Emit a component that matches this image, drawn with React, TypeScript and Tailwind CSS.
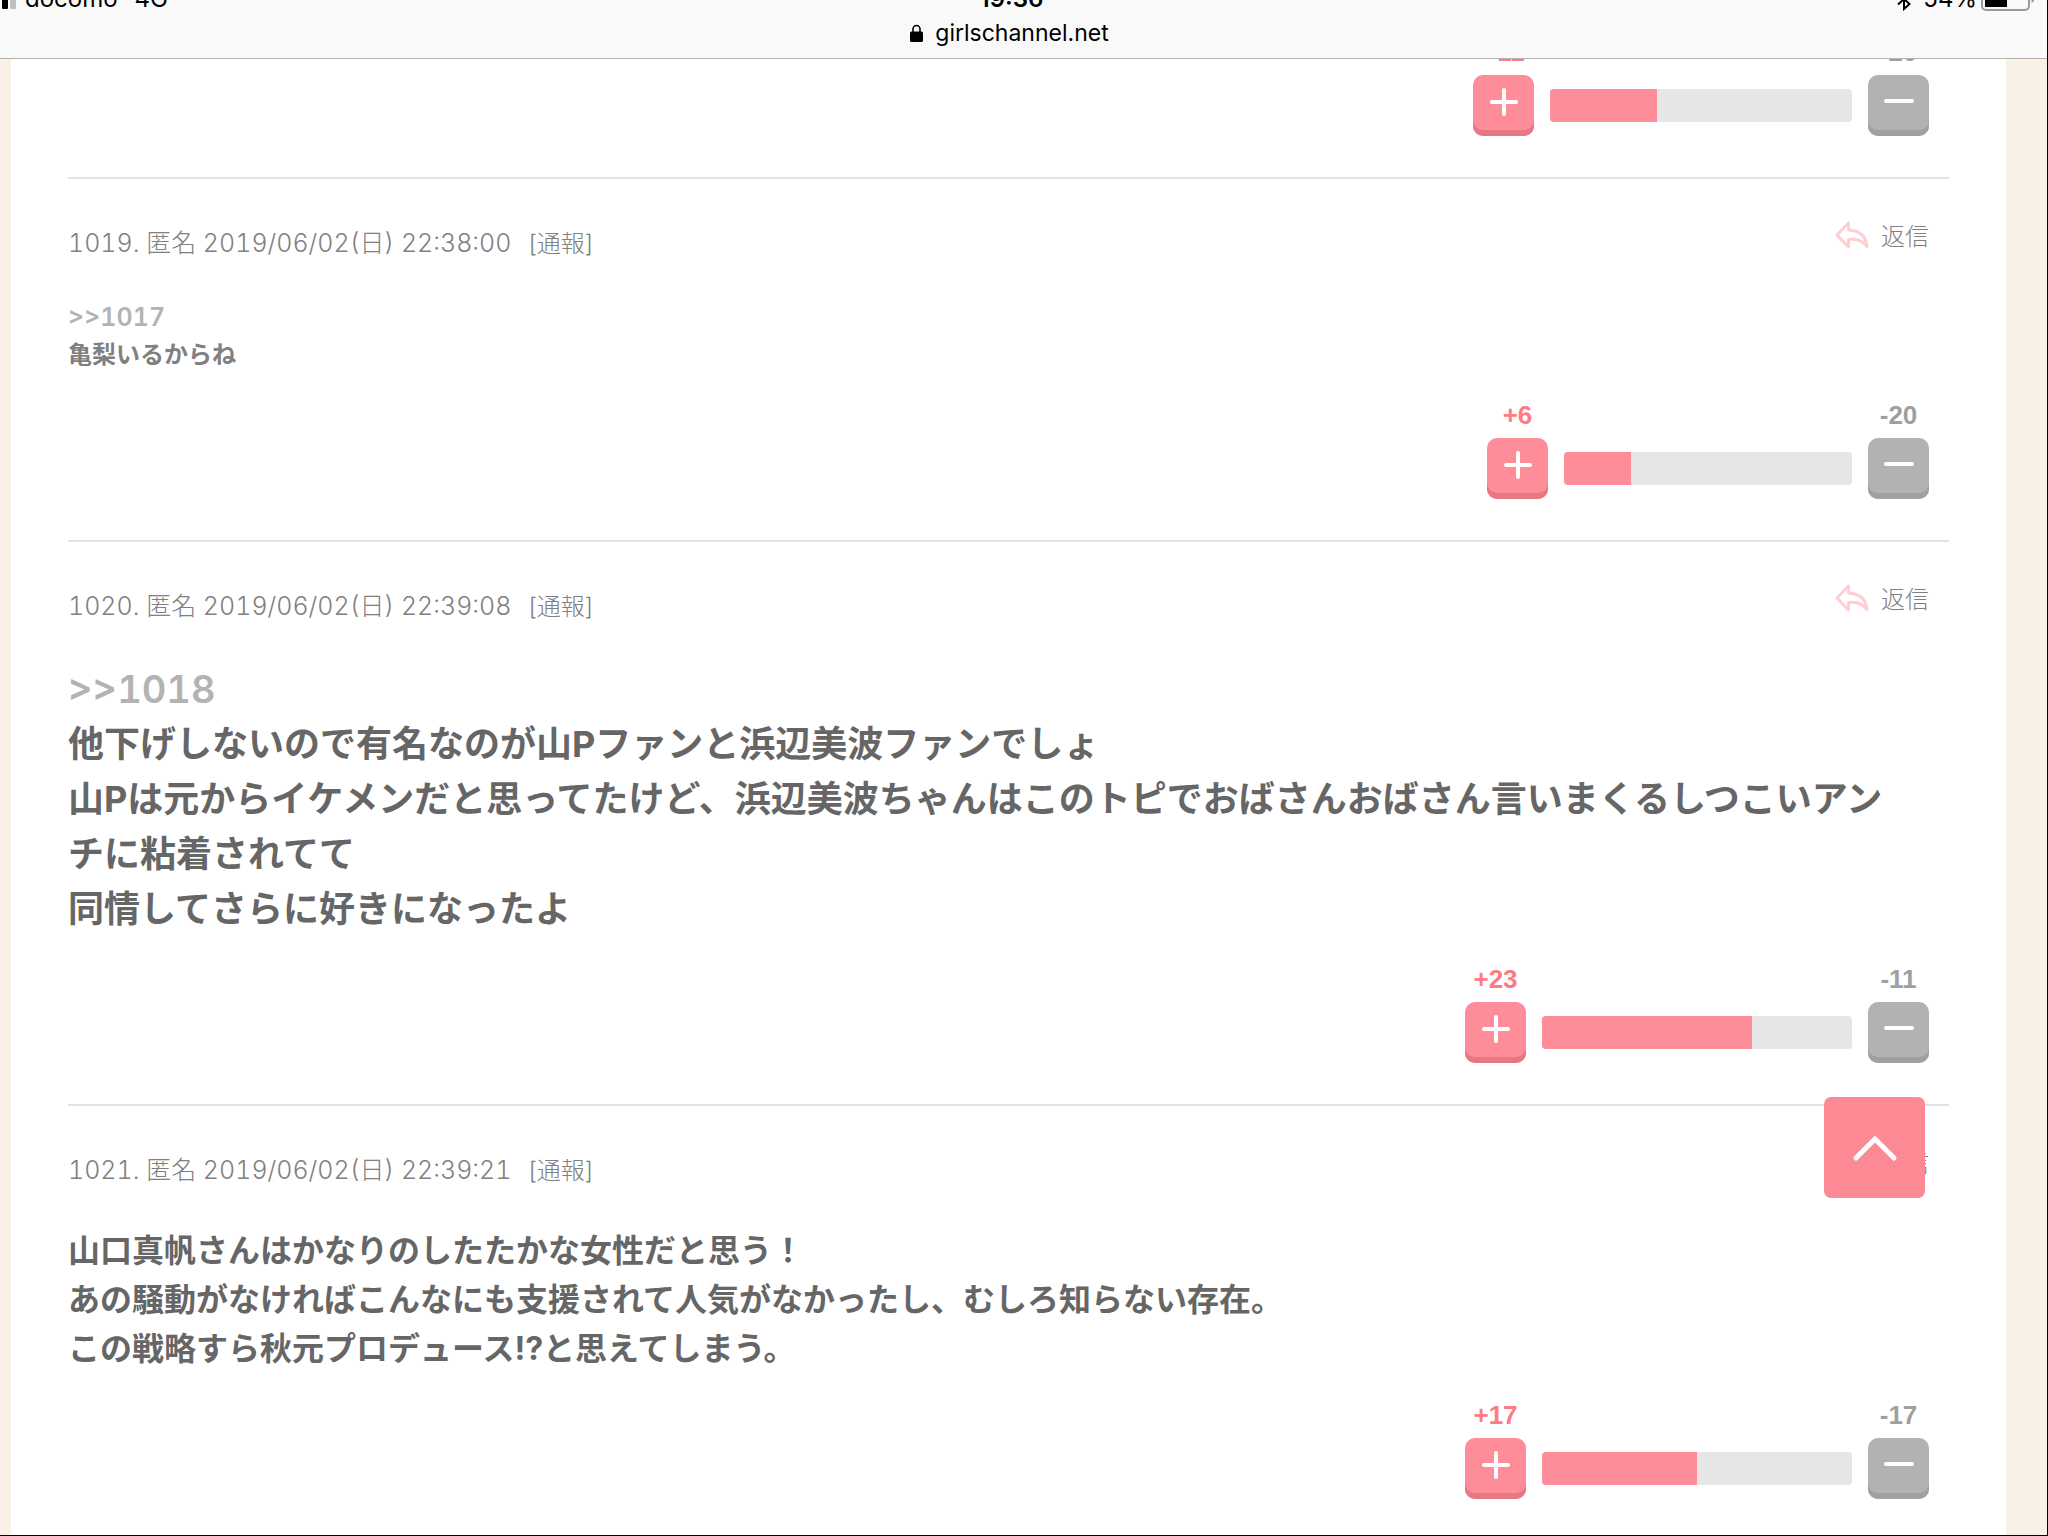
import React, { useState } from 'react'
import clsx from 'clsx'

type CommentSize = 'sm' | 'md' | 'lg'

type Post = {
  id: number
  date: string
  size: CommentSize
  anchor?: number
  lines: string[]
  plus: number
  minus: number
  barWidth: number
}

const FONT = "font-[Inter,'Noto_Sans_CJK_JP',sans-serif]"

const POSTS: Post[] = [
  {
    id: 1019,
    date: '2019/06/02(日) 22:38:00',
    size: 'sm',
    anchor: 1017,
    lines: ['亀梨いるからね'],
    plus: 6,
    minus: 20,
    barWidth: 288
  },
  {
    id: 1020,
    date: '2019/06/02(日) 22:39:08',
    size: 'lg',
    anchor: 1018,
    lines: [
      '他下げしないので有名なのが山Pファンと浜辺美波ファンでしょ',
      '山Pは元からイケメンだと思ってたけど、浜辺美波ちゃんはこのトピでおばさんおばさん言いまくるしつこいアンチに粘着されてて',
      '同情してさらに好きになったよ'
    ],
    plus: 23,
    minus: 11,
    barWidth: 310
  },
  {
    id: 1021,
    date: '2019/06/02(日) 22:39:21',
    size: 'md',
    lines: [
      '山口真帆さんはかなりのしたたかな女性だと思う！',
      'あの騒動がなければこんなにも支援されて人気がなかったし、むしろ知らない存在。',
      'この戦略すら秋元プロデュース⁉と思えてしまう。'
    ],
    plus: 17,
    minus: 17,
    barWidth: 310
  }
]

const bodyStyles: Record<CommentSize, string> = {
  sm: 'text-[24px] leading-[37px] text-[#808080]',
  md: 'text-[32px] leading-[49px] text-[#666]',
  lg: 'text-[36px] leading-[55px] text-[#666]'
}

const anchorStyles: Record<CommentSize, string> = {
  sm: 'text-[25px] leading-[37px]',
  md: 'text-[34px] leading-[49px]',
  lg: 'text-[38px] leading-[55px]'
}

const StatusBar = () => (
  <header className="relative z-10 h-[59px] shrink-0 overflow-hidden border-b border-[#b2b2b2] bg-[#f9f9f9] text-black">
    <div className="-mt-[17px] -ml-6 grid h-8 grid-cols-[1fr_auto_1fr] items-center text-[24px] leading-8">
      <div className="flex items-center gap-[9px] pl-[10px]">
        <div className="flex items-end gap-[2px]">
          <span className="h-3 w-[6px] rounded-[1px] bg-black" />
          <span className="h-3 w-[6px] rounded-[1px] bg-black" />
          <span className="h-4 w-[6px] rounded-[1px] bg-black" />
          <span className="h-5 w-[6px] rounded-[1px] bg-[#bfbfbf]" />
        </div>
        <span>docomo</span>
        <span className="ml-2">4G</span>
      </div>
      <span className="font-semibold">19:36</span>
      <div className="flex items-center justify-end pr-3">
        <svg className="mr-3 h-6 w-[14px]" viewBox="0 0 14 24" fill="none" stroke="currentColor" strokeWidth="2">
          <path d="M1 6.5 12.5 17 7 22V2l5.5 5L1 17.5" />
        </svg>
        <span>54%</span>
        <svg className="ml-1 h-6 w-[54px]" viewBox="0 0 54 24">
          <rect x="1" y="1" width="47" height="22" rx="4" fill="none" stroke="#9a9a9a" strokeWidth="2" />
          <rect x="4" y="4" width="22" height="16" fill="#000" />
          <path d="M50.500 8v8c1.800-.8 2.800-2.200 2.800-4s-1-3.200-2.800-4z" fill="#9a9a9a" />
        </svg>
      </div>
    </div>
    <div className="mt-[2px] -ml-7 flex items-center justify-center gap-3 text-[23px] leading-8">
      <svg className="h-[18px] w-[13px]" viewBox="0 0 13 18">
        <path d="M3 9V5a3.500 3.500 0 0 1 7 0v4" fill="none" stroke="#000" strokeWidth="1.600" />
        <rect y="7.500" width="13" height="10.500" rx="1.500" />
      </svg>
      <span>girlschannel.net</span>
    </div>
  </header>
)

type VoteProps = { plus: number; minus: number; barWidth: number }

const VoteBar = ({ plus, minus, barWidth }: VoteProps) => {
  const [vote, setVote] = useState(0)
  const up = plus + (vote > 0 ? 1 : 0)
  const down = minus + (vote < 0 ? 1 : 0)
  const percent = ((up / (up + down)) * 100).toFixed(1)

  return (
    <div className="flex items-end justify-end gap-4 pr-5 pb-[41px]">
      <div className="flex w-[61px] flex-col items-center gap-[7px]">
        <span className="font-['Liberation_Sans',sans-serif] text-[26px] leading-8 font-bold text-[#ff7a85]">
          +{up}
        </span>
        <button
          type="button"
          aria-label="プラス"
          className="h-[61px] w-[61px] rounded-[10px] bg-[#ff8d99] shadow-[inset_0_-6px_0_#e87784]"
          onClick={() => setVote(1)}
        >
          <svg className="mx-auto mb-2 h-8 w-8" viewBox="0 0 32 32" fill="none" stroke="#fff" strokeWidth="4" strokeLinecap="round">
            <path d="M4 16h24M16 4v24" />
          </svg>
        </button>
      </div>
      <div className="mb-[14px] h-[33px] overflow-hidden rounded-[4px] bg-[#e6e6e6]" style={{ width: barWidth }}>
        <div className="h-full bg-[#ff8d99]" style={{ width: `${percent}%` }} />
      </div>
      <div className="flex w-[61px] flex-col items-center gap-[7px]">
        <span className="font-['Liberation_Sans',sans-serif] text-[26px] leading-8 font-bold text-[#9f9f9f]">
          -{down}
        </span>
        <button
          type="button"
          aria-label="マイナス"
          className="h-[61px] w-[61px] rounded-[10px] bg-[#b2b2b2] shadow-[inset_0_-6px_0_#a0a0a0]"
          onClick={() => setVote(-1)}
        >
          <svg className="mx-auto mb-2 h-8 w-8" viewBox="0 0 32 32" fill="none" stroke="#fff" strokeWidth="4" strokeLinecap="round">
            <path d="M3 15h26" />
          </svg>
        </button>
      </div>
    </div>
  )
}

const ReplyIcon = () => (
  <svg className="-mt-1 h-7 w-[34px]" viewBox="0 0 34 28" fill="none" stroke="#ffcdd2" strokeWidth="3" strokeLinejoin="round">
    <path d="M13.500 2 2 14l11.500 12v-7.500c8-.8 14 .5 18.500 7C31 15.500 25 9.500 13.500 9z" />
  </svg>
)

const PostItem = ({ post }: { post: Post }) => (
  <li className="border-t-2 border-[#e3e3e3] pt-[46px]">
    <div className="mb-[38px] flex h-9 items-center justify-between pr-5 leading-9 font-light text-[#808080]">
      <p className="text-[25px] tabular-nums">
        <span>
          {post.id}. 匿名 {post.date}
        </span>
        <a href="#report" className="ml-4 text-[24px]">
          [通報]
        </a>
      </p>
      <a href="#reply" className="-mt-3 flex items-center gap-3 text-[24px]">
        <ReplyIcon />
        返信
      </a>
    </div>
    <div className={clsx('mb-[26px] pr-8 font-bold', bodyStyles[post.size])}>
      {post.anchor && (
        <a
          href={`#comment${post.anchor}`}
          className={clsx('block font-semibold text-[#b3b3b3] tabular-nums', anchorStyles[post.size])}
        >
          &gt;&gt;{post.anchor}
        </a>
      )}
      {post.lines.map((line) => (
        <p key={line}>{line}</p>
      ))}
    </div>
    <VoteBar plus={post.plus} minus={post.minus} barWidth={post.barWidth} />
  </li>
)

export default function App() {
  return (
    <div
      lang="ja"
      className={clsx('relative flex h-screen flex-col overflow-hidden border-r border-b border-black bg-[#faf1e6]', FONT)}
    >
      <StatusBar />
      <main className="mr-[41px] ml-[11px] flex-1 overflow-hidden bg-white px-[57px]">
        {/* list is scrolled so that only the end of the previous post shows */}
        <ul className="-mt-[23px]">
          <li>
            <VoteBar plus={11} minus={20} barWidth={302} />
          </li>
          {POSTS.map((post) => (
            <PostItem key={post.id} post={post} />
          ))}
        </ul>
      </main>
      <button
        type="button"
        aria-label="ページの先頭へ"
        className="absolute right-[122px] bottom-[337px] flex h-[101px] w-[101px] items-center justify-center rounded-[7px] bg-[#fd8994]"
      >
        <svg className="h-8 w-12" viewBox="0 0 48 32" fill="none" stroke="#fff" strokeWidth="5" strokeLinecap="round" strokeLinejoin="miter">
          <path d="M5 26 24 7l19 19" />
        </svg>
      </button>
    </div>
  )
}
